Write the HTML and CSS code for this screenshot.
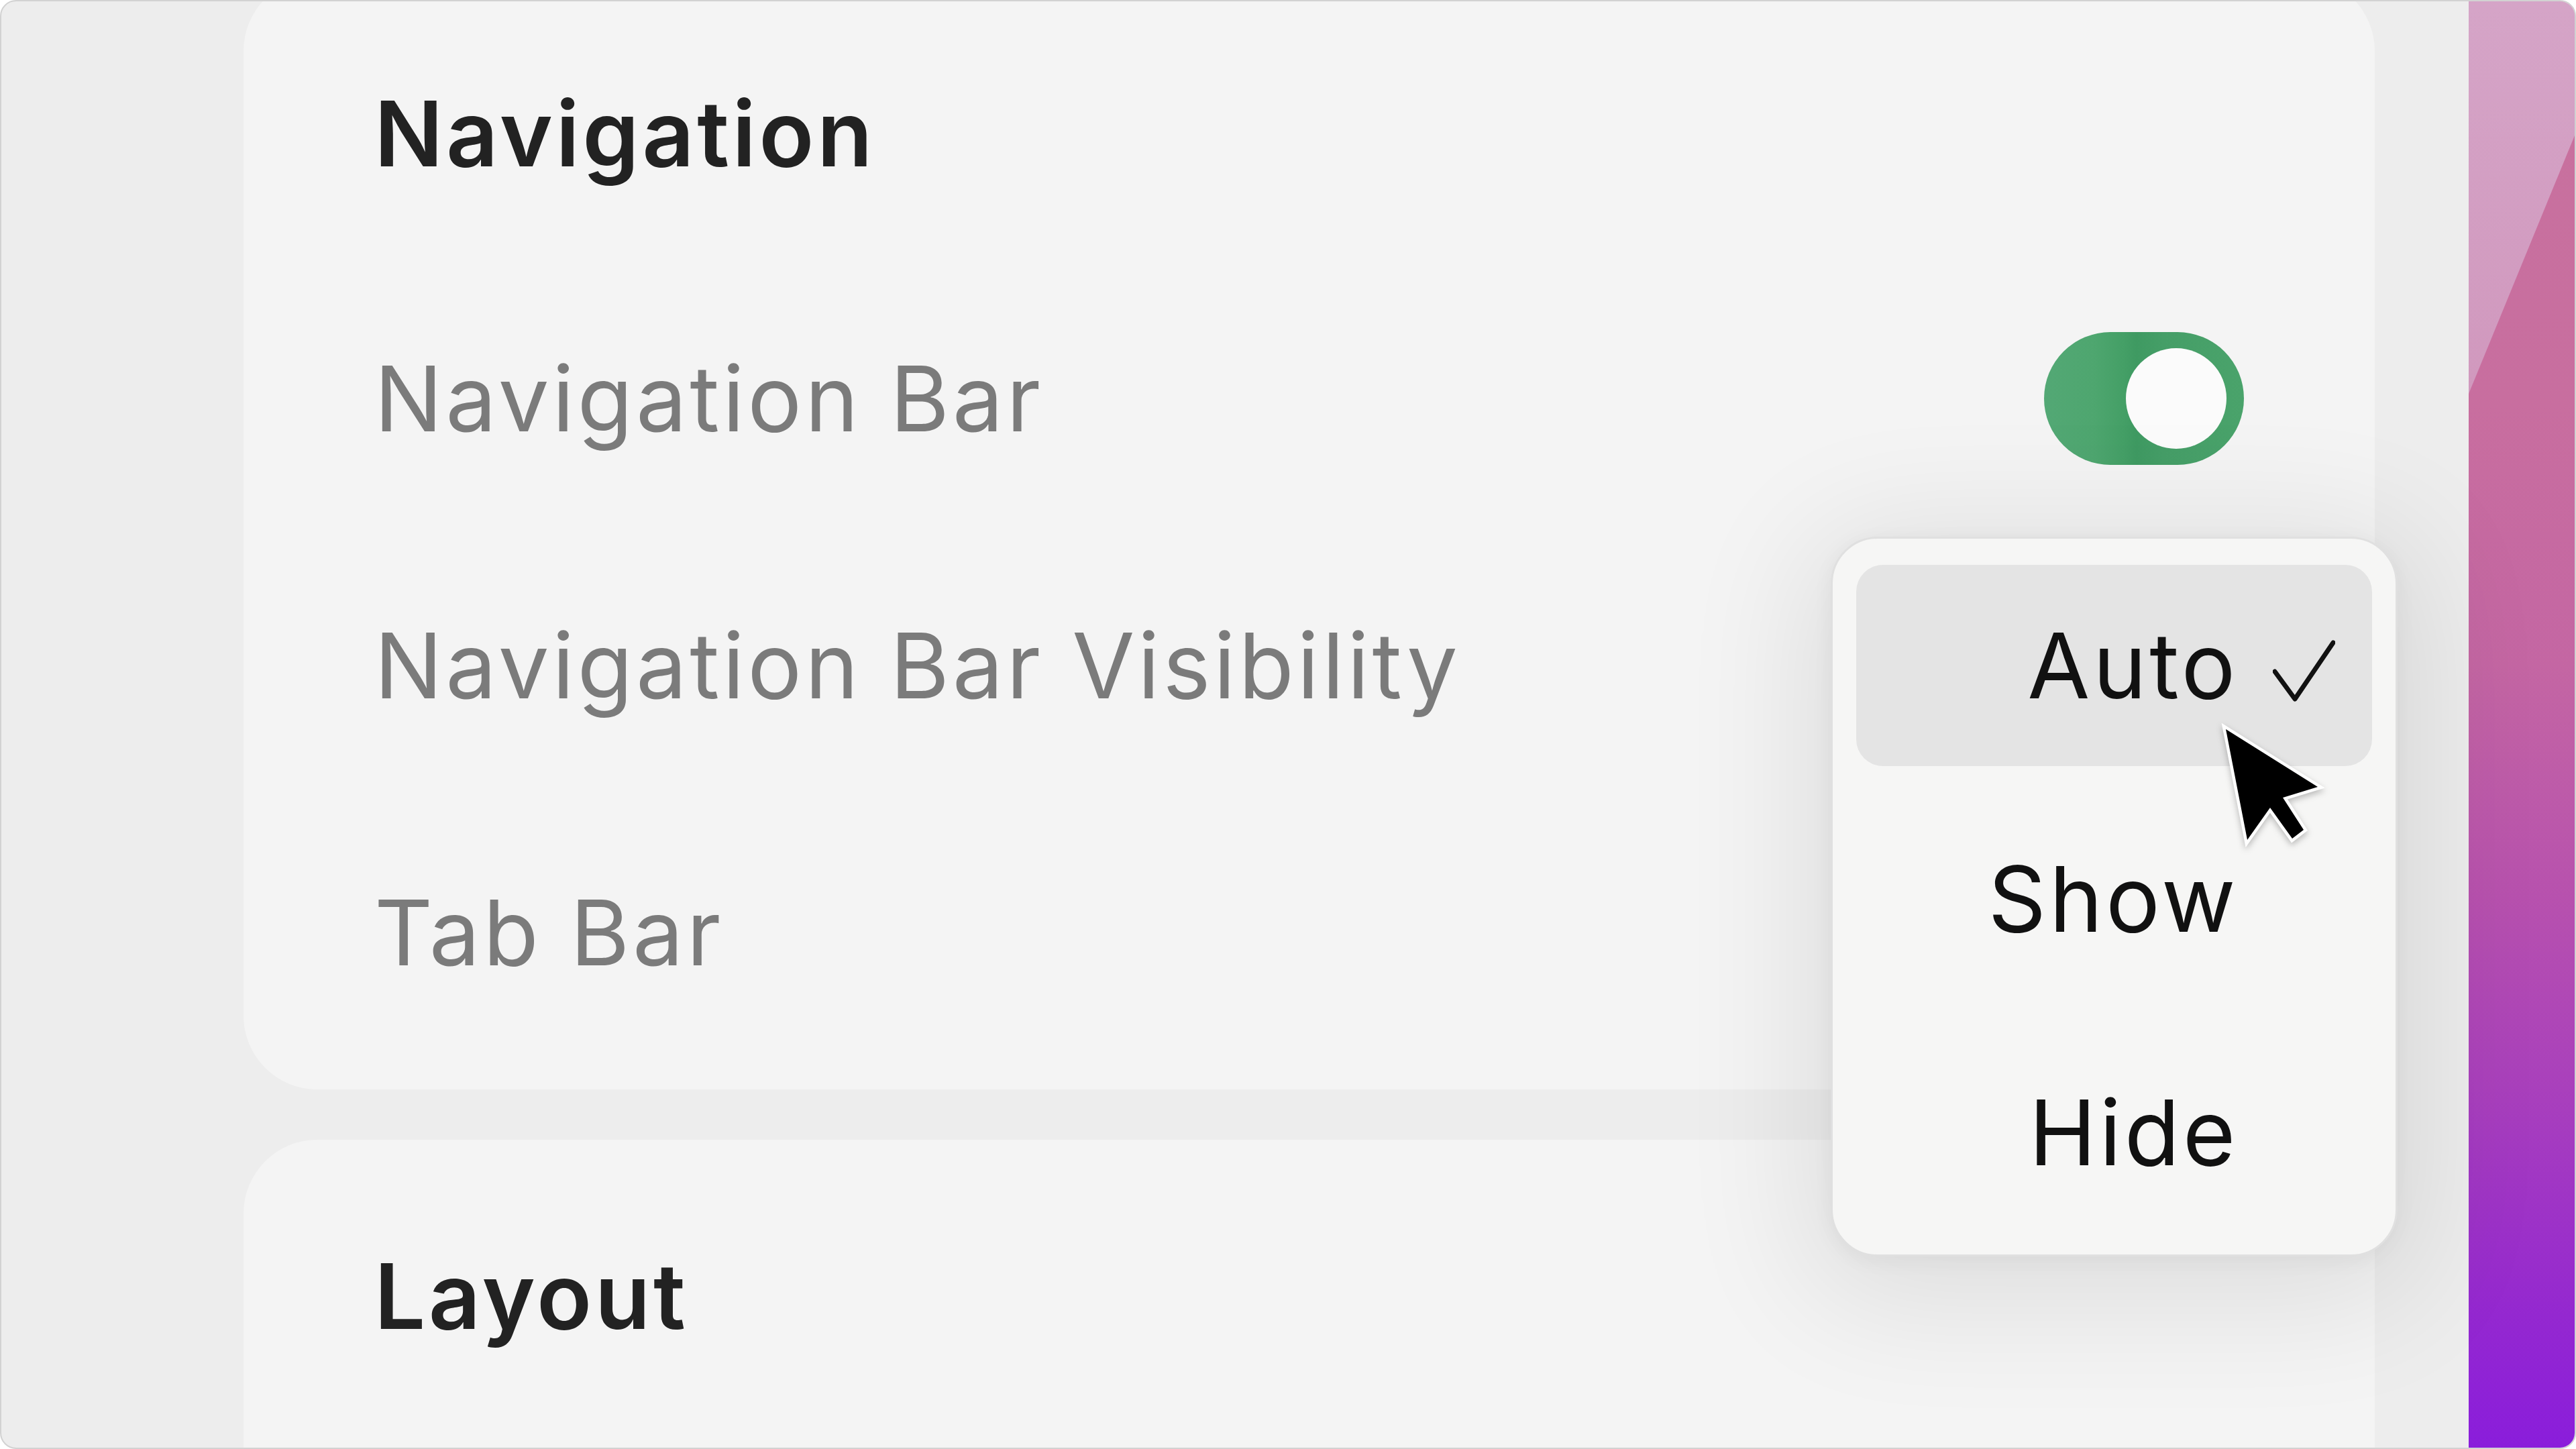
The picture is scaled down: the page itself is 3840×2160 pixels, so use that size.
FILE: index.html
```html
<!DOCTYPE html>
<html lang="en">
<head>
<meta charset="utf-8">
<title>Settings</title>
<link rel="stylesheet" href="styles.css">
</head>
<body>
<div class="frame">
  <main class="settings">
    <section class="card card-first">
      <h2 class="card-title">Navigation</h2>
      <div class="row">
        <span class="label">Navigation Bar</span>
        <span class="toggle"><span class="knob"></span></span>
      </div>
      <div class="row">
        <span class="label">Navigation Bar Visibility</span>
      </div>
      <div class="row">
        <span class="label">Tab Bar</span>
      </div>
    </section>
    <section class="card card-second">
      <h2 class="card-title">Layout</h2>
    </section>
  </main>
  <aside class="wallpaper">
    <svg class="wallpaper-art" viewBox="0 0 158 2156" preserveAspectRatio="none">
      <defs>
        <linearGradient id="sheen" x1="0" y1="0" x2="0" y2="1">
          <stop offset="0" stop-color="#e2d6f0"/>
          <stop offset="1" stop-color="#d9c2dc"/>
        </linearGradient>
      </defs>
      <polygon points="0,0 158,0 158,200 0,585" fill="url(#sheen)" fill-opacity="0.5"/>
    </svg>
  </aside>

  <div class="menu">
    <div class="menu-item selected">
      <span class="menu-text">Auto</span>
      <span class="check-slot">
        <svg class="check" viewBox="0 0 93 92"><polyline points="3,47 33,88 90,4"/></svg>
      </span>
    </div>
    <div class="menu-item">
      <span class="menu-text">Show</span>
      <span class="check-slot"></span>
    </div>
    <div class="menu-item">
      <span class="menu-text">Hide</span>
      <span class="check-slot"></span>
    </div>
  </div>

  <svg class="cursor" viewBox="-12 -12 164 192">
    <polygon points="0,0 32,165 66,117 99,163 116,150 85,102 137,86"/>
  </svg>
</div>
</body>
</html>
```

FILE: styles.css
```css
* { box-sizing: border-box; }

html, body {
  margin: 0;
  padding: 0;
  background: #ffffff;
}

body {
  font-family: "Inter", "Noto Sans", "Liberation Sans", sans-serif;
  width: 3840px;
  height: 2160px;
  overflow: hidden;
}

.frame {
  position: relative;
  width: 3840px;
  height: 2160px;
  border: 2px solid #d2d2d2;
  border-radius: 24px;
  overflow: hidden;
  background: #ededed;
  display: flex;
}

.settings {
  flex: 1;
  display: flex;
  flex-direction: column;
  gap: 75px;
  padding: 0 140px 0 361px;
  min-width: 0;
}

.card {
  background: #f4f4f4;
  border-radius: 110px;
  padding: 36px 195px 35px 195px;
  display: flex;
  flex-direction: column;
  flex-shrink: 0;
}

.card-first { margin-top: -36px; }

.card-second { min-height: 900px; }

.card-title {
  margin: 0;
  height: 393px;
  display: flex;
  align-items: center;
  font-size: 135px;
  line-height: 1.2;
  font-weight: 600;
  letter-spacing: 4.5px;
  color: #222222;
}

.row {
  height: 398px;
  display: flex;
  align-items: center;
  justify-content: space-between;
}

.label {
  font-size: 135px;
  line-height: 1.2;
  font-weight: 400;
  letter-spacing: 4.6px;
  color: #7b7b7b;
}

.toggle {
  width: 298px;
  height: 198px;
  border-radius: 99px;
  background: linear-gradient(90deg, #53a875 0%, #4ea66f 25%, #449f66 40%, #3f9a62 46%, #459e67 60%, #4aa36b 100%);
  display: flex;
  align-items: center;
  justify-content: flex-end;
  padding: 0 26px;
}

.knob {
  width: 150px;
  height: 150px;
  border-radius: 50%;
  background: #fbfbfb;
}

.wallpaper {
  width: 158px;
  flex-shrink: 0;
  background: linear-gradient(180deg,
    #c8729e 0%,
    #c86e9f 28%,
    #c466a3 46%,
    #b751ae 62%,
    #a83fbd 76%,
    #9529cf 90%,
    #8a1ddb 100%);
  display: flex;
}

.wallpaper-art {
  width: 100%;
  height: 100%;
  display: block;
}

.menu {
  position: absolute;
  left: 2727px;
  top: 798px;
  width: 845px;
  height: 1073px;
  border: 3px solid #e0e0e0;
  border-radius: 70px;
  background: #f6f6f5;
  padding: 39px 35px;
  display: flex;
  flex-direction: column;
  gap: 48px;
  box-shadow: 0 30px 190px 40px rgba(0, 0, 0, 0.09), 0 6px 30px rgba(0, 0, 0, 0.05);
}

.menu-item {
  height: 300px;
  border-radius: 40px;
  display: flex;
  align-items: center;
  justify-content: flex-end;
  flex-shrink: 0;
}

.menu-item.selected { background: #e4e4e4; }

.menu-text {
  font-size: 135px;
  line-height: 1.2;
  font-weight: 400;
  letter-spacing: 4.5px;
  color: #111111;
}

.check-slot {
  width: 199px;
  display: flex;
  align-items: center;
  padding-left: 51px;
  margin-top: 16px;
}

.check {
  width: 93px;
  height: 92px;
  display: block;
}

.check polyline {
  fill: none;
  stroke: #111111;
  stroke-width: 7;
  stroke-linecap: round;
  stroke-linejoin: round;
}

.cursor {
  position: absolute;
  left: 3304px;
  top: 1073px;
  width: 164px;
  height: 192px;
  overflow: visible;
  filter: drop-shadow(0 4px 5px rgba(0, 0, 0, 0.25));
}

.cursor polygon {
  fill: #000000;
  stroke: #ffffff;
  stroke-width: 9;
  stroke-linejoin: miter;
  paint-order: stroke;
}
```
